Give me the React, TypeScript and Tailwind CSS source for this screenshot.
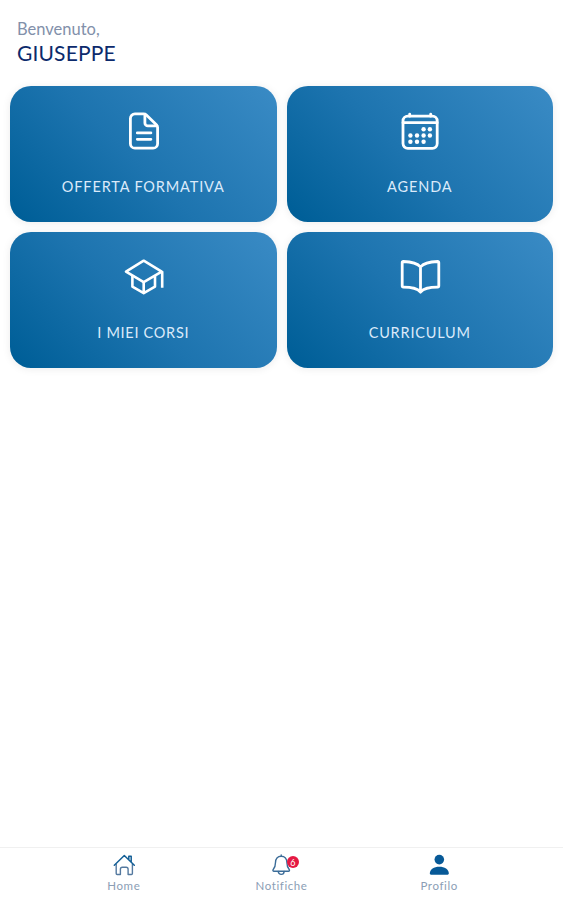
import type { ReactNode } from 'react'

const DocumentIcon = () => (
  <svg className="w-11 h-11" viewBox="0 0 44 44" fill="none" stroke="currentColor" strokeWidth={2.8} strokeLinecap="round" strokeLinejoin="round">
    <path d="M36.6 18.5V34.7a4.5 4.5 0 0 1-4.5 4.5H13.9A4.5 4.5 0 0 1 9.4 34.7V9.4a4.5 4.5 0 0 1 4.5-4.5h8.7a4 4 0 0 1 2.8 1.1l10 9.7a4 4 0 0 1 1.2 2.8Z" />
    <path d="M23.9 5.4v8.5a3 3 0 0 0 3 3h9" />
    <path d="M16.3 23.9h13.6M16.3 30.3h13.6" />
  </svg>
)

const CalendarIcon = () => (
  <svg className="w-11 h-11" viewBox="0 0 44 44" fill="none" stroke="currentColor" strokeWidth={2.8} strokeLinecap="round" strokeLinejoin="round">
    <rect x="5" y="7.1" width="34.2" height="32.2" rx="4.8" />
    <path d="M11.7 5.2v2M32.7 5.2v2M5 13.7h34.2" />
    <g fill="currentColor" stroke="none">
      <circle cx="25.6" cy="20.2" r="2.2" />
      <circle cx="31.9" cy="20.2" r="2.2" />
      <circle cx="12.4" cy="26.5" r="2.2" />
      <circle cx="19" cy="26.5" r="2.2" />
      <circle cx="25.6" cy="26.5" r="2.2" />
      <circle cx="31.9" cy="26.5" r="2.2" />
      <circle cx="12.4" cy="32.8" r="2.2" />
      <circle cx="19" cy="32.8" r="2.2" />
      <circle cx="25.6" cy="32.8" r="2.2" />
    </g>
  </svg>
)

const SchoolIcon = () => (
  <svg className="w-11 h-11" viewBox="0 0 44 44" fill="none" stroke="currentColor" strokeWidth={2.6} strokeLinejoin="round">
    <path d="M22.7 5.7 5 16.6l17.7 10.6 18-10.6Z" />
    <path d="M41.2 16.2v16.6M11.4 20.5v11.1l11.3 6.5 11.3-6.5V20.5M22.7 27v11" />
  </svg>
)

const BookIcon = () => (
  <svg className="w-11 h-11" viewBox="0 0 44 44" fill="none" stroke="currentColor" strokeWidth={2.8} strokeLinecap="round" strokeLinejoin="round">
    <path d="M22.5 12C19.5 8.2 14 6.7 5.4 6.5a1.2 1.2 0 0 0-1.2 1.2v23.1c0 .8.5 1.3 1.2 1.3 8.6.1 13.8.9 17.1 5.1 3.3-4.2 8.5-5 17.1-5.1.7 0 1.2-.5 1.2-1.3V7.7a1.2 1.2 0 0 0-1.2-1.2C31 6.7 25.5 8.2 22.5 12ZM22.5 12v25" />
  </svg>
)

const HomeIcon = () => (
  <svg className="w-6 h-6" viewBox="0 0 24 24" fill="none" stroke="#54799f" strokeWidth={1.4} strokeLinejoin="round">
    <path d="M4.2 11v9.5a1 1 0 0 0 1 1h3.2v-5.2a2 2 0 0 1 2-2h3.7a2 2 0 0 1 2 2v5.2h3.3a1 1 0 0 0 1-1V11" />
    <path d="M2.3 12.2 12.3 2.5l10 9.7M16.8 6.5V3.2h2.4v5.5" stroke="#135f96" strokeWidth={1.5} strokeLinecap="round" />
  </svg>
)

const BellIcon = () => (
  <svg className="w-6 h-6" viewBox="0 0 24 24" fill="none" stroke="#3b6c98" strokeWidth={1.4} strokeLinecap="round" strokeLinejoin="round">
    <path d="M12.2 2v1.2M12.2 3.2c-3.6 0-5.7 2.7-5.7 6.3 0 4.3-.9 5.4-2.3 7-.6.7-.2 1.8.8 1.8h14.4c1 0 1.4-1.1.8-1.8-1.4-1.6-2.3-2.7-2.3-7 0-3.6-2.1-6.3-5.7-6.3Z" />
    <path d="M9.3 18.5a2.9 2.9 0 0 0 5.8 0" />
  </svg>
)

const PersonIcon = () => (
  <svg className="w-6 h-6" viewBox="0 0 24 24" fill="#075997">
    <circle cx="12.3" cy="6.6" r="4.8" />
    <path d="M2.8 20.6c0-4.6 4.2-6.9 9.5-6.9s9.5 2.3 9.5 6.9c0 .7-.5 1.1-1.2 1.1H4c-.7 0-1.2-.4-1.2-1.1Z" />
  </svg>
)

const cards = [
  { label: 'OFFERTA FORMATIVA', icon: <DocumentIcon />, spacing: 'tracking-[0.86px]' },
  { label: 'AGENDA', icon: <CalendarIcon />, spacing: 'tracking-[0.9px]' },
  { label: 'I MIEI CORSI', icon: <SchoolIcon />, spacing: 'tracking-[0.7px]' },
  { label: 'CURRICULUM', icon: <BookIcon />, spacing: 'tracking-[0.8px]' },
]

function MenuCard({ label, icon, spacing }: { label: string; icon: ReactNode; spacing: string }) {
  return (
    <button
      type="button"
      className="flex h-[136px] flex-col items-center rounded-[21px] bg-[linear-gradient(45deg,#005f98_4%,#1d74af_46%,#3a8bc5_100%)] pt-[23px] text-white shadow-[0_1px_8px_rgba(0,0,0,0.08)]"
    >
      {icon}
      <span className={`mt-[24px] text-[14.5px] leading-5 text-[#dbeafa] ${spacing}`}>{label}</span>
    </button>
  )
}

function NavItem({ label, icon, badge }: { label: string; icon: ReactNode; badge?: number }) {
  return (
    <button type="button" className="flex flex-col items-center pt-[5px]">
      <span className="relative">
        {icon}
        {badge && (
          <span className="absolute left-[17.5px] top-[3px] flex h-3 w-3 items-center justify-center rounded-full bg-[#e51943] text-[9px] leading-none text-white">
            {badge}
          </span>
        )}
      </span>
      <span className="mt-[2px] text-[11.5px] leading-[14px] tracking-[0.6px] text-[#8b9eb5]">{label}</span>
    </button>
  )
}

export default function App() {
  return (
    <div className="flex h-[900px] w-[563px] flex-col bg-white font-['Lato','Noto_Sans',sans-serif]">
      <header className="h-[86px] pl-[17px] pt-[19px]">
        <p className="text-[16.5px] leading-[21px] text-[#8290aa]">Benvenuto,</p>
        <h1 className="text-[21px] leading-[26px] tracking-[0.15px] text-[#0c2a6c]">GIUSEPPE</h1>
      </header>

      <main className="flex-1 px-[10px]">
        <div className="grid grid-cols-2 gap-[10px]">
          {cards.map((card) => (
            <MenuCard key={card.label} {...card} />
          ))}
        </div>
      </main>

      <nav className="grid h-[53px] grid-cols-3 border-t border-[#f0f0f0] px-[45px]">
        <NavItem label="Home" icon={<HomeIcon />} />
        <NavItem label="Notifiche" icon={<BellIcon />} badge={6} />
        <NavItem label="Profilo" icon={<PersonIcon />} />
      </nav>
    </div>
  )
}
